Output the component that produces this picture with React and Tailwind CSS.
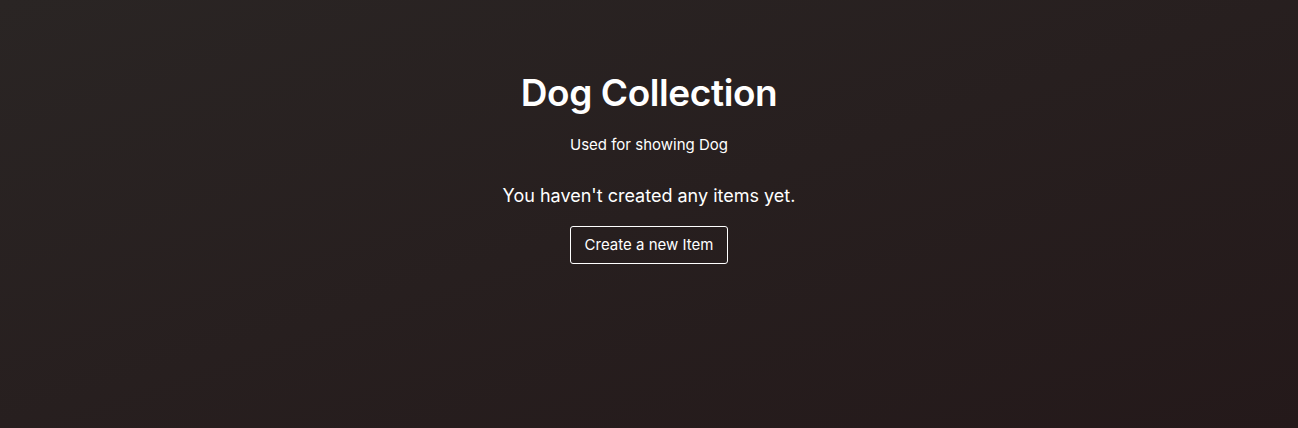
export default function App() {
  return (
    <div
      className="flex min-h-[428px] w-full flex-col items-center bg-gradient-to-br from-[#2a2524] to-[#24191a] pt-[68px] text-white"
      style={{ fontFamily: "Inter, 'Liberation Sans', sans-serif" }}
    >
      <h1 className="text-[37px] font-semibold leading-[50px] tracking-[-0.4px]">Dog Collection</h1>
      <p className="mt-[16px] text-[15px] leading-[22px]">Used for showing Dog</p>
      <p className="mt-[26px] text-[18px] leading-[28px]">You haven't created any items yet.</p>
      <button className="mt-[16px] h-[38px] w-[158px] rounded-[3px] border border-white text-[15px]">
        Create a new Item
      </button>
    </div>
  );
}
